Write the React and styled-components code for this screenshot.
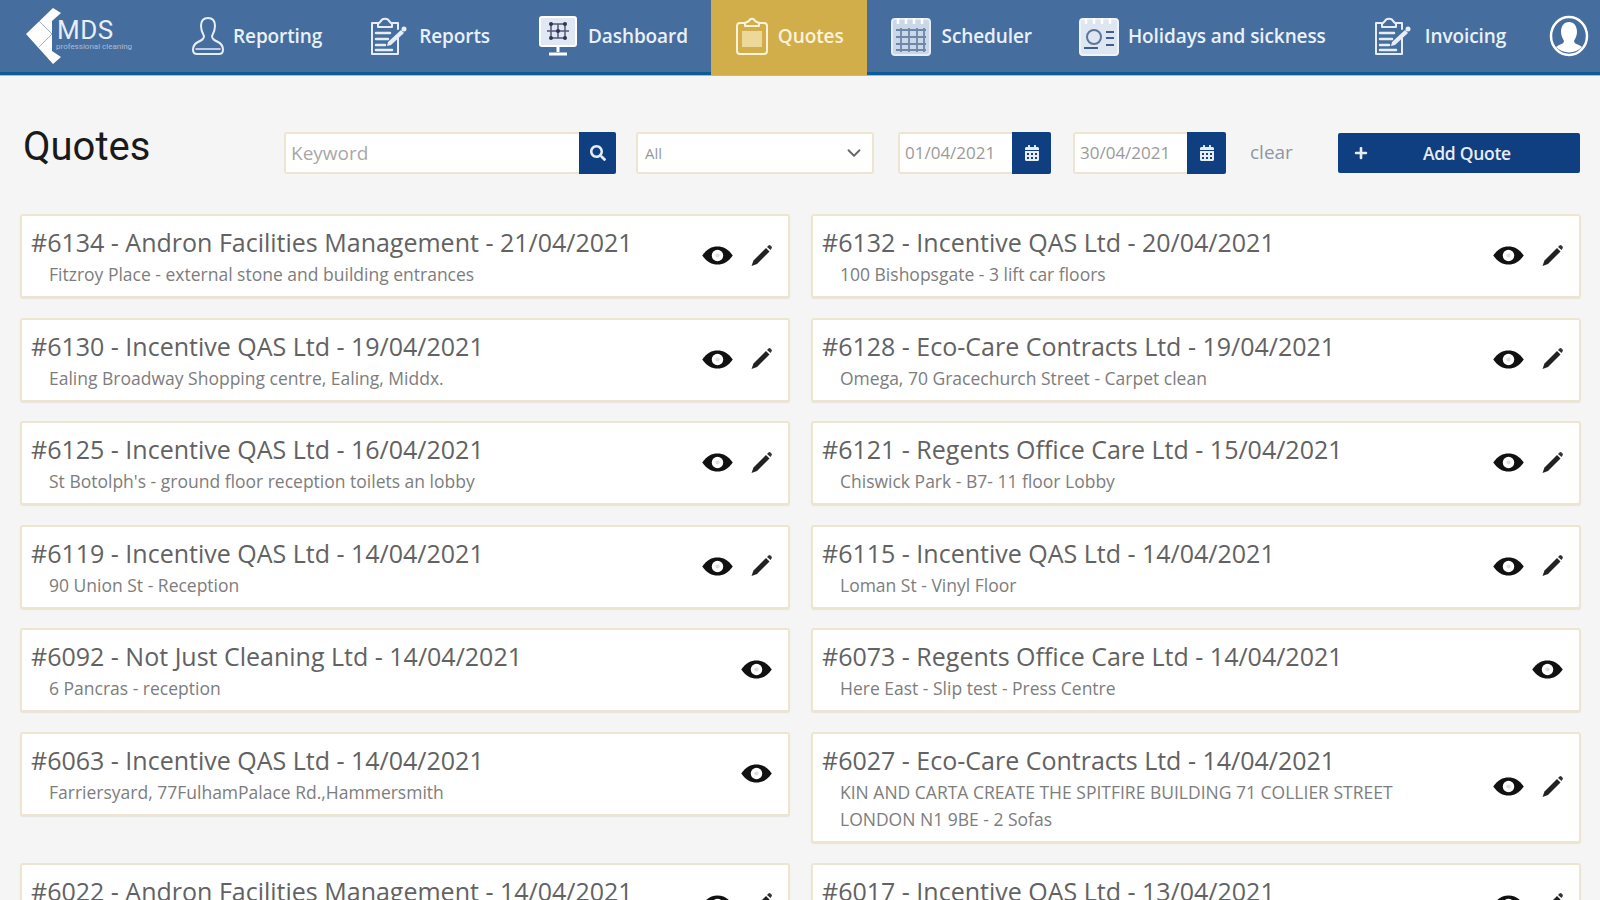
import React from "react";
import styled, { createGlobalStyle } from "styled-components";
import { FaSearch, FaPlus, FaCalendarAlt } from "react-icons/fa";
import { ChevronDown } from "lucide-react";

const Global = createGlobalStyle`
  html, body { margin: 0; height: 900px; overflow: hidden; background: #f5f5f5; }
  * { box-sizing: border-box; }
  body { font-family: "Open Sans", "Liberation Sans", sans-serif; }
`;

const Page = styled.div`width: 1600px; height: 900px; overflow: hidden;`;
const Header = styled.header`
  height: 75px; background: #456e9f; display: flex; align-items: stretch;
  border-bottom: 3px solid #0d5c98; box-shadow: 0 1px 0 #8cc4e6; padding-left: 25px;
`;
const Logo = styled.div`width: 142.500px; display: flex; align-items: center; position: relative; flex: none;`;
const LogoName = styled.div`color: #e8eef6; font: 400 26px/20px "Roboto", sans-serif; letter-spacing: .5px; margin-left: -6px; margin-top: -12px;`;
const LogoTag = styled.div`position: absolute; left: 31px; top: 43px; color: #a9bdd6; font: 400 8px/8px "Roboto", sans-serif; white-space: nowrap;`;
const Nav = styled.nav`display: flex; align-items: stretch; flex: none;`;
const NavItem = styled.div`
  display: flex; align-items: center; gap: ${p => p.$gap}px; padding: 0 23.500px;
  background: ${p => p.$active ? "#d2ae4b" : "transparent"};
  box-shadow: ${p => p.$active ? "0 3px 0 #d2ae4b" : "none"};
  color: ${p => p.$active ? "#fbf3da" : "#eaf0f7"};
  font: 600 19px/24px "Open Sans", sans-serif; white-space: nowrap; letter-spacing: -.1px;
`;
const Avatar = styled.div`margin-left: 19px; display: flex; align-items: center;`;

const Main = styled.main`padding: 0 19px 0 20px;`;
const Toolbar = styled.div`display: flex; align-items: center; height: 139px; padding-top: 18px;`;
const Title = styled.h1`margin: 0 0 14px; width: 264px; padding-left: 3px; flex: none; color: #1a1a1a; font: 400 40px/44px "Roboto", sans-serif;`;
const Field = styled.div`
  display: flex; height: 42px; width: ${p => p.$w}px; margin: 0 ${p => p.$mr}px 2px 0; flex: none;
  background: #fff; border: 2px solid #eee5d0; border-radius: 3px;
`;
const Input = styled.input`
  flex: 1; min-width: 0; border: 0; outline: 0; background: transparent; padding: 0 5px;
  font: 400 ${p => p.$fs || 19}px "Open Sans", sans-serif; color: #9a9a9a;
  &::placeholder { color: #a8a8a8; opacity: 1; }
`;
const FieldButton = styled.div`
  width: ${p => p.$w}px; margin: -2px -2px -2px 0; background: #0f3f80; color: #e8ecf3;
  display: flex; align-items: center; justify-content: center; border-radius: 0 2px 2px 0; flex: none;
`;
const SelectBox = styled(Field)`align-items: center; justify-content: space-between; padding: 0 7px; color: #999; font-size: 15px;`;
const Clear = styled.div`width: 88px; margin-bottom: 4px; flex: none; color: #8d97a3; font-size: 19px;`;
const AddButton = styled.div`
  width: 242px; height: 40px; flex: none; background: #0f3f80; color: #e8ecf3; border-radius: 2px; margin-bottom: 2px;
  display: flex; align-items: center; padding-left: 16px; font: 600 17.500px/20px "Open Sans", sans-serif;
  letter-spacing: -.3px;
`;
const AddLabel = styled.span`margin-left: 55px;`;

const Grid = styled.div`display: grid; grid-template-columns: 770px 770px; column-gap: 21px; row-gap: 19.600px; align-items: start;`;
const Card = styled.article`
  display: flex; align-items: center; background: #fff; border: 2px solid #eee5d0; border-radius: 3px;
  padding: 10px 15px 8px 9px; box-shadow: 0 1px 1px rgba(120,100,60,.12);
`;
const CardBody = styled.div`flex: 1; min-width: 0;`;
const CardTitle = styled.div`font: 400 25px/32px "Open Sans", sans-serif; color: #626262; white-space: nowrap;`;
const CardSub = styled.div`font: 400 17.500px/27px "Open Sans", sans-serif; color: #7d7d7d; padding-left: 18px; max-width: 590px; margin-top: 3px;`;
const Actions = styled.div`display: flex; align-items: center; gap: 15px; flex: none; margin-bottom: 3px;`;

const Eye = () => (
  <svg width="33" height="21" viewBox="0 0 34 22">
    <path d="M1 11C6 4 11 1.500 17 1.500S28 4 33 11C28 18 23 20.500 17 20.500S6 18 1 11Z" fill="#111" />
    <circle cx="17" cy="11" r="6" fill="#fff" />
    <circle cx="17" cy="11" r="2.200" fill="#ddd" />
  </svg>
);
const Pencil = () => (
  <svg width="24" height="24" viewBox="0 0 24 24">
    <path d="M4.500 16.500 17 4l3.500 3.500L8 20 2.500 22Z" fill="#222" />
    <path d="M18 3l1.500-1.500a1.500 1.500 0 0 1 2 0l1 1a1.500 1.500 0 0 1 0 2L21.500 6Z" fill="#333" />
  </svg>
);

const S = { fill: "none", stroke: "#e6edf6", strokeWidth: 2, strokeLinejoin: "round", strokeLinecap: "round" };
const ActiveS = { ...S, stroke: "#fbf3da" };

const LogoMark = () => (
  <svg width="38" height="58" viewBox="0 0 38 58" style={{ flex: "none" }}>
    <path d="M1 27 28 1l8 5-9 8v30l9 6-8 7Z" fill="#fff" />
    <path d="M14 14l13 13M14 40l13-13" stroke="#9fb3cb" strokeWidth="1" />
  </svg>
);
const PersonIcon = () => (
  <svg width="34" height="40" viewBox="0 0 34 40">
    <path {...S} d="M10 10c0-6 3-8 7-8s7 2 7 8c0 5-2 8-3 10 0 3 2 4 6 6 4 2 5 5 5 8 0 3-2 4-4 4H6c-2 0-4-1-4-4 0-3 1-6 5-8 4-2 6-3 6-6-1-2-3-5-3-10Z" />
    <path {...S} d="M5 33h24" strokeWidth="1.500" />
  </svg>
);
const ClipPenIcon = () => (
  <svg width="38" height="40" viewBox="0 0 38 40">
    <path {...S} d="M9 7H3v31h26V22" />
    <path {...S} d="M23 7h6v6M9 8l3-3c1-3 7-3 8 0l3 3v3H9Z" />
    <path {...S} strokeWidth="2.500" d="M7 17h14M7 23h12M7 29h9M7 34h16" />
    <path fill="#e6edf6" d="M19 26l13-12 3 3-13 12-4 1Z" />
    <circle cx="35" cy="13" r="2.500" fill="#e6edf6" />
  </svg>
);
const DashIcon = () => (
  <svg width="42" height="42" viewBox="0 0 42 42">
    <rect x="3" y="2" width="36" height="29" rx="2" fill="#dfe8f3" stroke="#fff" strokeWidth="2" />
    <path d="M14 9h14M10 16h22M14 23h14M14 9v14M21 9v14M28 9v14" stroke="#557" strokeWidth="1.500" fill="none" />
    <circle cx="14" cy="9" r="2" fill="#335" /><circle cx="28" cy="9" r="2" fill="#335" /><circle cx="21" cy="16" r="2" fill="#335" /><circle cx="14" cy="23" r="2" fill="#335" /><circle cx="28" cy="23" r="2" fill="#335" />
    <path d="M21 31v6M12 39h18" stroke="#fff" strokeWidth="3" />
  </svg>
);
const QuoteIcon = () => (
  <svg width="34" height="40" viewBox="0 0 34 40">
    <path {...ActiveS} d="M10 7H5a3 3 0 0 0-3 3v25a3 3 0 0 0 3 3h24a3 3 0 0 0 3-3V10a3 3 0 0 0-3-3h-5" />
    <path {...ActiveS} d="M10 10V7l4-2c1-3 5-3 6 0l4 2v3Z" />
    <rect x="7" y="15" width="20" height="16" fill="#ecd898" />
  </svg>
);
const GridCalIcon = () => (
  <svg width="40" height="40" viewBox="0 0 40 40">
    <rect x="1" y="3" width="38" height="36" rx="3" fill="#c9d7e8" stroke="#e6edf6" strokeWidth="2" />
    <path d="M7 2v6M15 2v6M23 2v6M31 2v6" stroke="#fff" strokeWidth="2.500" />
    <path d="M5 14h30M5 21h30M5 28h30M5 34h30M10 12v24M18 12v24M26 12v24M33 12v24" stroke="#6d87a8" strokeWidth="1.800" />
  </svg>
);
const HolidayIcon = () => (
  <svg width="40" height="40" viewBox="0 0 40 40">
    <rect x="1" y="3" width="38" height="36" rx="3" fill="#dde6f1" stroke="#eef3f9" strokeWidth="2" />
    <path d="M7 2v6M15 2v6M23 2v6M31 2v6" stroke="#fff" strokeWidth="2.500" />
    <circle cx="15" cy="21" r="7" fill="none" stroke="#5c7699" strokeWidth="2" />
    <path d="M27 16h8M27 22h8M27 29h8M5 32h14" stroke="#3f5f8a" strokeWidth="2" />
  </svg>
);
const AvatarIcon = () => (
  <svg width="40" height="42" viewBox="0 0 40 42">
    <ellipse cx="20" cy="21" rx="18" ry="19" fill="none" stroke="#fff" strokeWidth="2.500" />
    <path fill="#fff" d="M20 7c5 0 8 4 8 10 0 4-2 7-3 9 0 2 2 3 5 4l3 2a18 18 0 0 1-26 0l3-2c3-1 5-2 5-4-1-2-3-5-3-9 0-6 3-10 8-10Z" />
  </svg>
);

const nav = [
  { label: "Reporting", Icon: PersonIcon, gap: 8 },
  { label: "Reports", Icon: ClipPenIcon, gap: 12 },
  { label: "Dashboard", Icon: DashIcon, gap: 9 },
  { label: "Quotes", Icon: QuoteIcon, gap: 9, active: true },
  { label: "Scheduler", Icon: GridCalIcon, gap: 11 },
  { label: "Holidays and sickness", Icon: HolidayIcon, gap: 9 },
  { label: "Invoicing", Icon: ClipPenIcon, gap: 14 },
];

const quotes = [
  ["#6134 - Andron Facilities Management - 21/04/2021", "Fitzroy Place - external stone and building entrances", true],
  ["#6132 - Incentive QAS Ltd - 20/04/2021", "100 Bishopsgate - 3 lift car floors", true],
  ["#6130 - Incentive QAS Ltd - 19/04/2021", "Ealing Broadway Shopping centre, Ealing, Middx.", true],
  ["#6128 - Eco-Care Contracts Ltd - 19/04/2021", "Omega, 70 Gracechurch Street - Carpet clean", true],
  ["#6125 - Incentive QAS Ltd - 16/04/2021", "St Botolph's - ground floor reception toilets an lobby", true],
  ["#6121 - Regents Office Care Ltd - 15/04/2021", "Chiswick Park - B7- 11 floor Lobby", true],
  ["#6119 - Incentive QAS Ltd - 14/04/2021", "90 Union St - Reception", true],
  ["#6115 - Incentive QAS Ltd - 14/04/2021", "Loman St - Vinyl Floor", true],
  ["#6092 - Not Just Cleaning Ltd - 14/04/2021", "6 Pancras - reception", false],
  ["#6073 - Regents Office Care Ltd - 14/04/2021", "Here East - Slip test - Press Centre", false],
  ["#6063 - Incentive QAS Ltd - 14/04/2021", "Farriersyard, 77FulhamPalace Rd.,Hammersmith", false],
  ["#6027 - Eco-Care Contracts Ltd - 14/04/2021", "KIN AND CARTA CREATE THE SPITFIRE BUILDING 71 COLLIER STREET LONDON N1 9BE - 2 Sofas", true],
  ["#6022 - Andron Facilities Management - 14/04/2021", "\u00a0", true],
  ["#6017 - Incentive QAS Ltd - 13/04/2021", "\u00a0", true],
];

export default function App() {
  return (
    <Page>
      <Global />
      <Header>
        <Logo>
          <LogoMark />
          <LogoName>MDS</LogoName>
          <LogoTag>professional cleaning</LogoTag>
        </Logo>
        <Nav>
          {nav.map(({ label, Icon, active, gap }) => (
            <NavItem key={label} $active={active} $gap={gap}>
              <Icon />
              {label}
            </NavItem>
          ))}
        </Nav>
        <Avatar><AvatarIcon /></Avatar>
      </Header>
      <Main>
        <Toolbar>
          <Title>Quotes</Title>
          <Field $w={332} $mr={20}>
            <Input placeholder="Keyword" />
            <FieldButton $w={37}><FaSearch size={16} /></FieldButton>
          </Field>
          <SelectBox $w={238} $mr={24}>
            All
            <ChevronDown size={22} color="#666" />
          </SelectBox>
          <Field $w={153} $mr={22}>
            <Input readOnly value="01/04/2021" $fs={17} />
            <FieldButton $w={39}><FaCalendarAlt size={16} /></FieldButton>
          </Field>
          <Field $w={153} $mr={24}>
            <Input readOnly value="30/04/2021" $fs={17} />
            <FieldButton $w={39}><FaCalendarAlt size={16} /></FieldButton>
          </Field>
          <Clear>clear</Clear>
          <AddButton>
            <FaPlus size={14} />
            <AddLabel>Add Quote</AddLabel>
          </AddButton>
        </Toolbar>
        <Grid>
          {quotes.map(([title, sub, edit]) => (
            <Card key={title}>
              <CardBody>
                <CardTitle>{title}</CardTitle>
                <CardSub>{sub}</CardSub>
              </CardBody>
              <Actions>
                <Eye />
                {edit && <Pencil />}
              </Actions>
            </Card>
          ))}
        </Grid>
      </Main>
    </Page>
  );
}
